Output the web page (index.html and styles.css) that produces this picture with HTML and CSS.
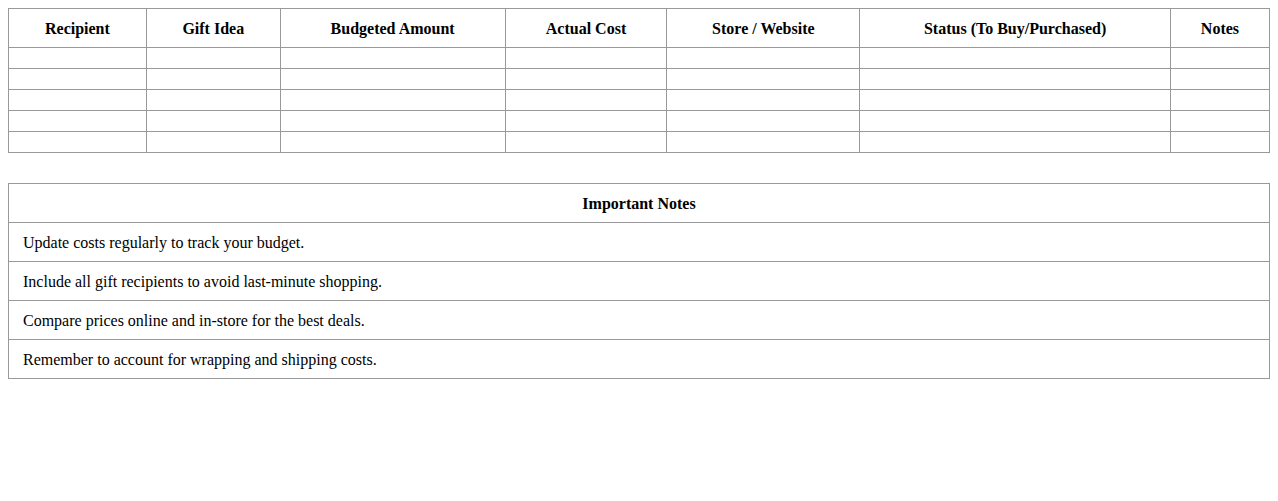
FILE: index.html
```html
<!DOCTYPE html>
<html lang="en">
<head>
<meta charset="utf-8">
<title>Gift Budget</title>
<link rel="stylesheet" href="styles.css">
</head>
<body>
<table class="grid">
  <colgroup>
    <col class="c1"><col class="c2"><col class="c3"><col class="c4"><col class="c5"><col class="c6"><col class="c7">
  </colgroup>
  <thead>
    <tr>
      <th>Recipient</th>
      <th>Gift Idea</th>
      <th>Budgeted Amount</th>
      <th>Actual Cost</th>
      <th>Store / Website</th>
      <th>Status (To Buy/Purchased)</th>
      <th>Notes</th>
    </tr>
  </thead>
  <tbody>
    <tr><td></td><td></td><td></td><td></td><td></td><td></td><td></td></tr>
    <tr><td></td><td></td><td></td><td></td><td></td><td></td><td></td></tr>
    <tr><td></td><td></td><td></td><td></td><td></td><td></td><td></td></tr>
    <tr><td></td><td></td><td></td><td></td><td></td><td></td><td></td></tr>
    <tr><td></td><td></td><td></td><td></td><td></td><td></td><td></td></tr>
  </tbody>
</table>

<table class="grid notes">
  <thead>
    <tr><th>Important Notes</th></tr>
  </thead>
  <tbody>
    <tr><td>Update costs regularly to track your budget.</td></tr>
    <tr><td>Include all gift recipients to avoid last-minute shopping.</td></tr>
    <tr><td>Compare prices online and in-store for the best deals.</td></tr>
    <tr><td>Remember to account for wrapping and shipping costs.</td></tr>
  </tbody>
</table>
</body>
</html>
```

FILE: styles.css
```css
body {
  margin: 8px;
  font-family: "Liberation Serif", "Times New Roman", serif;
  font-size: 16px;
  color: #000;
  background: #fff;
}

.grid {
  width: 100%;
  border-collapse: collapse;
  table-layout: fixed;
}

.grid th,
.grid td {
  border: 1px solid #999;
  padding: 10px;
}

.grid th {
  font-weight: bold;
  text-align: center;
  line-height: 18px;
  padding: 11px 10px 9px;
}

.grid td {
  line-height: 18px;
  text-align: left;
}

.c1 { width: 10.93%; }
.c2 { width: 10.62%; }
.c3 { width: 17.83%; }
.c4 { width: 12.84%; }
.c5 { width: 15.29%; }
.c6 { width: 24.64%; }
.c7 { width: auto; }

.notes {
  margin-top: 30px;
}

.notes td {
  padding: 11px 14px 9px;
}
```
